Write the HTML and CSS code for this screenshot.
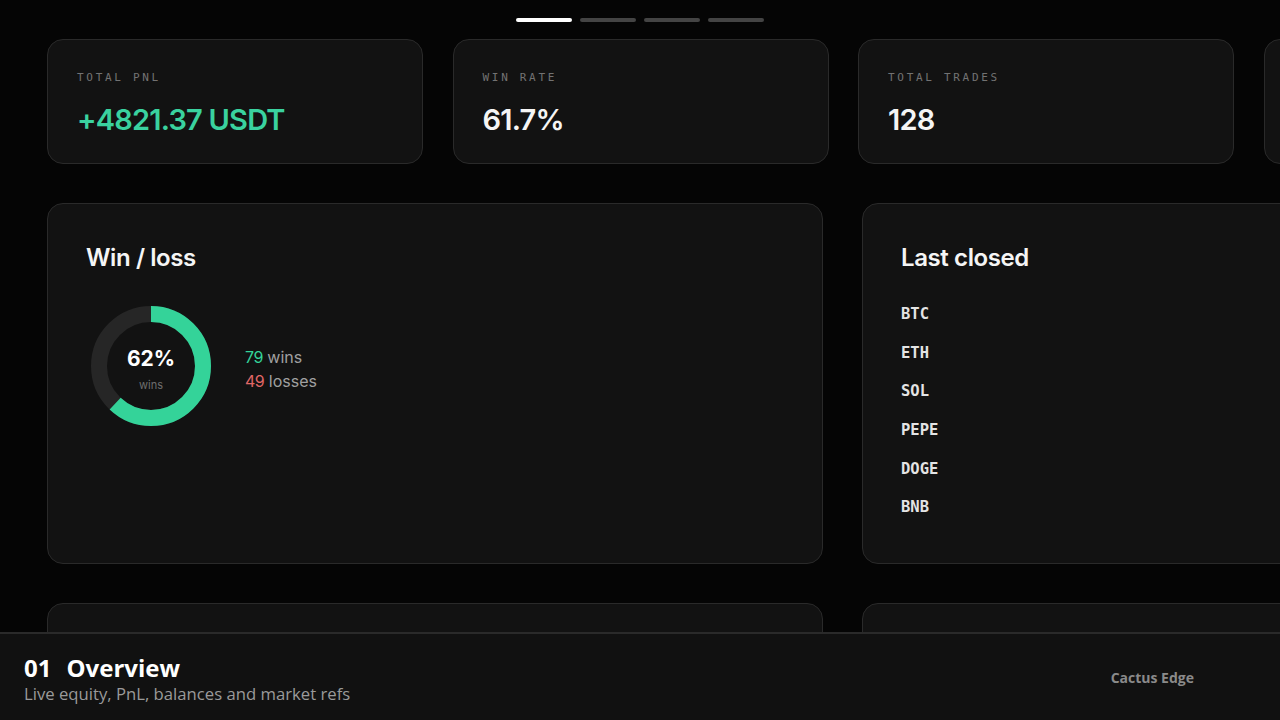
FILE: index.html
```html
<!DOCTYPE html>
<html lang="en">
<head>
<meta charset="utf-8">
<title>Overview</title>
<link rel="stylesheet" href="styles.css">
</head>
<body>
<div class="screen">
  <main class="stage">
    <div class="steps">
      <span class="step active"></span>
      <span class="step"></span>
      <span class="step"></span>
      <span class="step"></span>
    </div>
    <section class="stats">
      <div class="card stat">
        <div class="label">TOTAL PNL</div>
        <div class="value green">+4821.37 USDT</div>
      </div>
      <div class="card stat">
        <div class="label">WIN RATE</div>
        <div class="value">61.7%</div>
      </div>
      <div class="card stat">
        <div class="label">TOTAL TRADES</div>
        <div class="value">128</div>
      </div>
      <div class="card stat"></div>
    </section>
    <section class="panels">
      <div class="card panel">
        <h2 class="panel-title">Win / loss</h2>
        <div class="winloss">
          <div class="donut">
            <svg width="120" height="120" viewBox="0 0 120 120">
              <circle cx="60" cy="60" r="52" fill="none" stroke="#262626" stroke-width="16"/>
              <circle cx="60" cy="60" r="52" fill="none" stroke="#34d399" stroke-width="16"
                stroke-dasharray="202.6 326.7" transform="rotate(-90 60 60)"/>
            </svg>
            <div class="donut-center">
              <div class="donut-pct">62%</div>
              <div class="donut-sub">wins</div>
            </div>
          </div>
          <div class="legend">
            <div><span class="num green">79</span> wins</div>
            <div><span class="num red">49</span> losses</div>
          </div>
        </div>
      </div>
      <div class="card panel">
        <h2 class="panel-title">Last closed</h2>
        <ul class="tickers">
          <li>BTC</li>
          <li>ETH</li>
          <li>SOL</li>
          <li>PEPE</li>
          <li>DOGE</li>
          <li>BNB</li>
        </ul>
      </div>
    </section>
    <section class="panels">
      <div class="card panel"></div>
      <div class="card panel"></div>
    </section>
  </main>
  <footer class="footer">
    <div class="footer-text">
      <div class="footer-title"><span class="footer-num">01</span>Overview</div>
      <div class="footer-sub">Live equity, PnL, balances and market refs</div>
    </div>
    <div class="brand">Cactus Edge</div>
  </footer>
</div>
</body>
</html>
```
FILE: styles.css
```css
* { box-sizing: border-box; }
html, body { margin: 0; padding: 0; }
body {
  background: #050505;
  color: #f2f2f2;
  font-family: Inter, "Noto Sans", sans-serif;
}
.screen {
  width: 1280px;
  height: 720px;
  display: flex;
  flex-direction: column;
  overflow: hidden;
}
.stage {
  height: 632px;
  flex: none;
  overflow: hidden;
  padding: 18px 0 0 47px;
  display: flex;
  flex-direction: column;
}
.steps {
  display: flex;
  gap: 8px;
  margin-left: 469px;
  height: 4px;
  margin-bottom: 17px;
}
.step {
  width: 56px;
  height: 4px;
  border-radius: 2px;
  background: #444;
}
.step.active { background: #fff; }
.card {
  background: #121212;
  border: 1px solid #2a2a2a;
  border-radius: 16px;
  flex: none;
}
.stats {
  display: grid;
  grid-template-columns: repeat(4, 376px);
  gap: 29.5px;
  margin-bottom: 39px;
}
.stat {
  height: 125px;
  padding: 31px 29px 0;
}
.label {
  font-family: "DejaVu Sans Mono", monospace;
  font-size: 11px;
  letter-spacing: 2.7px;
  color: #727272;
  line-height: 14px;
}
.value {
  margin-top: 17px;
  font-size: 29px;
  font-weight: 600;
  letter-spacing: -0.8px;
  line-height: 36px;
  color: #f5f5f5;
}
.green { color: #34d399; }
.value.green { color: #3ad29f; }
.red { color: #e06767; }
.panels {
  display: grid;
  grid-template-columns: repeat(2, 776px);
  gap: 39px;
  margin-bottom: 39px;
}
.panel {
  height: 361px;
  padding: 38px 38px 0;
}
.panel-title {
  margin: 0;
  font-size: 24px;
  font-weight: 600;
  letter-spacing: -0.4px;
  line-height: 32px;
  color: #f5f5f5;
}
.winloss {
  display: flex;
  align-items: center;
  gap: 34px;
  margin-top: 32px;
  margin-left: 5px;
}
.donut {
  position: relative;
  width: 120px;
  height: 120px;
}
.donut svg { display: block; }
.donut-center {
  position: absolute;
  inset: 0;
  display: flex;
  flex-direction: column;
  align-items: center;
  justify-content: center;
  padding-top: 6px;
}
.donut-pct {
  font-size: 21px;
  font-weight: 700;
  line-height: 24px;
  color: #fff;
}
.donut-sub {
  font-size: 11px;
  color: #6e6e6e;
  line-height: 14px;
  margin-top: 7px;
}
.legend {
  font-size: 16px;
  line-height: 24px;
  color: #a0a0a0;
  margin-top: 6px;
}
.legend .num { letter-spacing: -0.5px; }
.tickers {
  list-style: none;
  margin: 30px 0 0;
  padding: 0;
}
.tickers li {
  font-family: "DejaVu Sans Mono", monospace;
  font-weight: 700;
  font-size: 15.5px;
  line-height: 20px;
  color: #e4e4e4;
  margin-bottom: 18.7px;
}
.footer {
  flex: none;
  height: 88px;
  background: #111;
  border-top: 2px solid #2a2a2a;
  display: flex;
  align-items: center;
  justify-content: space-between;
  padding: 0 86px 0 24px;
  font-family: "Open Sans", "Noto Sans", sans-serif;
}
.footer-text { margin-top: 5px; }
.footer-title {
  font-size: 24px;
  font-weight: 700;
  line-height: 28px;
  color: #fff;
}
.footer-num { margin-right: 15px; }
.footer-sub {
  font-size: 16.7px;
  line-height: 23px;
  color: #9a9a9a;
}
.brand {
  font-size: 14px;
  font-weight: 700;
  color: #8a8a8a;
  margin-top: 0;
}
```
